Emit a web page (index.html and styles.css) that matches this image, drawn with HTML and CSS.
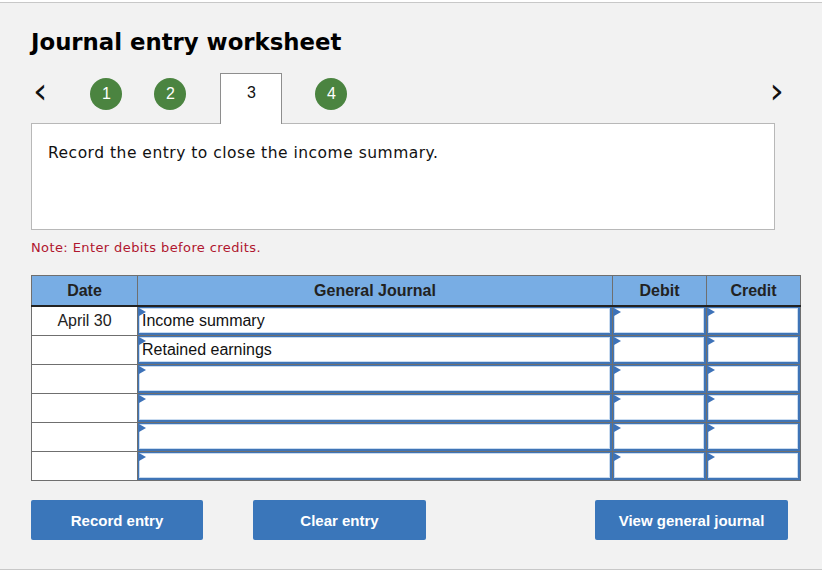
FILE: index.html
```html
<!DOCTYPE html>
<html lang="en">
<head>
    <meta charset="UTF-8">
    <title>Journal entry worksheet</title>
    <link rel="stylesheet" href="styles.css">
</head>
<body>
    <div class="worksheet">
        <h1 class="title">Journal entry worksheet</h1>

        <div class="steps">
            <span class="arrow prev">&lsaquo;</span>
            <span class="step done">1</span>
            <span class="step done">2</span>
            <span class="step current">3</span>
            <span class="step done">4</span>
            <span class="arrow next">&rsaquo;</span>
        </div>

        <div class="prompt">
            <p>Record the entry to close the income summary.</p>
        </div>

        <p class="note">Note: Enter debits before credits.</p>

        <table class="journal">
            <thead>
                <tr>
                    <th class="col-date">Date</th>
                    <th class="col-account">General Journal</th>
                    <th class="col-amount">Debit</th>
                    <th class="col-amount">Credit</th>
                </tr>
            </thead>
            <tbody>
                <tr>
                    <td class="date">April 30</td>
                    <td class="entry"><div class="field">Income summary</div></td>
                    <td class="entry"><div class="field"></div></td>
                    <td class="entry"><div class="field"></div></td>
                </tr>
                <tr>
                    <td class="date"></td>
                    <td class="entry"><div class="field">Retained earnings</div></td>
                    <td class="entry"><div class="field"></div></td>
                    <td class="entry"><div class="field"></div></td>
                </tr>
                <tr>
                    <td class="date"></td>
                    <td class="entry"><div class="field"></div></td>
                    <td class="entry"><div class="field"></div></td>
                    <td class="entry"><div class="field"></div></td>
                </tr>
                <tr>
                    <td class="date"></td>
                    <td class="entry"><div class="field"></div></td>
                    <td class="entry"><div class="field"></div></td>
                    <td class="entry"><div class="field"></div></td>
                </tr>
                <tr>
                    <td class="date"></td>
                    <td class="entry"><div class="field"></div></td>
                    <td class="entry"><div class="field"></div></td>
                    <td class="entry"><div class="field"></div></td>
                </tr>
                <tr>
                    <td class="date"></td>
                    <td class="entry"><div class="field"></div></td>
                    <td class="entry"><div class="field"></div></td>
                    <td class="entry"><div class="field"></div></td>
                </tr>
            </tbody>
        </table>

        <div class="actions">
            <button class="btn btn-record">Record entry</button>
            <button class="btn btn-clear">Clear entry</button>
            <button class="btn btn-view">View general journal</button>
        </div>
    </div>
</body>
</html>
```

FILE: styles.css
```css
body {
    margin: 0;
    background-color: #ffffff;
    font-family: "DejaVu Sans", Verdana, sans-serif;
    color: #000;
}

.worksheet {
    margin-top: 2px;
    height: 568px;
    box-sizing: border-box;
    padding: 0 22px 0 31px;
    background-color: #f2f2f2;
    border-top: 1px solid #c8c8c8;
    border-bottom: 1px solid #c8c8c8;
}

.title {
    margin: 0;
    padding-top: 24px;
    font-size: 22.8px;
    font-weight: bold;
    line-height: 30px;
}

.steps {
    display: flex;
    align-items: flex-start;
    height: 51px;
    margin-top: 16px;
    position: relative;
    z-index: 1;
}

.arrow {
    font-family: "DejaVu Sans", sans-serif;
    font-size: 36px;
    line-height: 30px;
    margin-top: 3px;
    color: #111;
}

.prev {
    margin-left: 2px;
    margin-right: 43px;
}

.next {
    margin-left: auto;
    margin-right: 16px;
}

.step {
    font-family: "Liberation Sans", Arial, sans-serif;
    font-size: 16px;
}

.step.done {
    width: 32px;
    height: 32px;
    margin-top: 5px;
    border-radius: 50%;
    background-color: #4b8440;
    color: #fff;
    display: flex;
    align-items: center;
    justify-content: center;
    margin-right: 32px;
}

.step.current {
    width: 62px;
    height: 51px;
    box-sizing: border-box;
    background-color: #fff;
    border: 1px solid #8e8e8e;
    border-bottom: none;
    display: flex;
    justify-content: center;
    padding-top: 10px;
    margin-left: 2px;
    margin-right: 33px;
    color: #111;
}

.prompt {
    margin-top: -1px;
    width: 744px;
    height: 107px;
    box-sizing: border-box;
    background-color: #fff;
    border: 1px solid #b8b8b8;
    padding: 20px 16px;
}

.prompt p {
    margin: 0;
    font-size: 15.5px;
    letter-spacing: 0.5px;
    color: #111;
}

.note {
    margin: 10px 0 0;
    font-size: 13px;
    letter-spacing: 0.4px;
    color: #b0172f;
}

.journal {
    margin-top: 20px;
    width: 770px;
    border-collapse: collapse;
    font-family: "Liberation Sans", Arial, sans-serif;
    font-size: 16px;
    background-color: #fff;
}

.journal th {
    height: 29px;
    padding: 0;
    background-color: #78ade4;
    color: #222;
    font-weight: bold;
    border: 1px solid #6f6f6f;
    border-bottom: 2px solid #222;
}

.col-date {
    width: 105px;
}

.col-amount {
    width: 93px;
}

.journal td {
    height: 28px;
    padding: 0;
    border: 1px solid #6f6f6f;
}

.journal td.date {
    text-align: center;
    color: #222;
}

.journal td.entry {
    position: relative;
}

.field {
    height: 28px;
    box-sizing: border-box;
    border: 2px solid #3f74b6;
    border-top-width: 1px;
    border-left-width: 1px;
    box-shadow: inset 0 0 0 1px #c9dbef;
    padding: 3px 0 0 3px;
    color: #111;
    line-height: 20px;
}

.field::before {
    content: "";
    position: absolute;
    left: 1px;
    top: 1px;
    border-top: 4px solid transparent;
    border-bottom: 4px solid transparent;
    border-left: 7px solid #3d72b8;
}

.actions {
    display: flex;
    margin-top: 19px;
}

.btn {
    height: 40px;
    border: none;
    border-radius: 2px;
    background-color: #3a76ba;
    color: #fff;
    font-family: "Liberation Sans", Arial, sans-serif;
    font-size: 15px;
    font-weight: bold;
}

.btn-record {
    width: 172px;
}

.btn-clear {
    width: 173px;
    margin-left: 50px;
}

.btn-view {
    width: 193px;
    margin-left: 169px;
}
```
